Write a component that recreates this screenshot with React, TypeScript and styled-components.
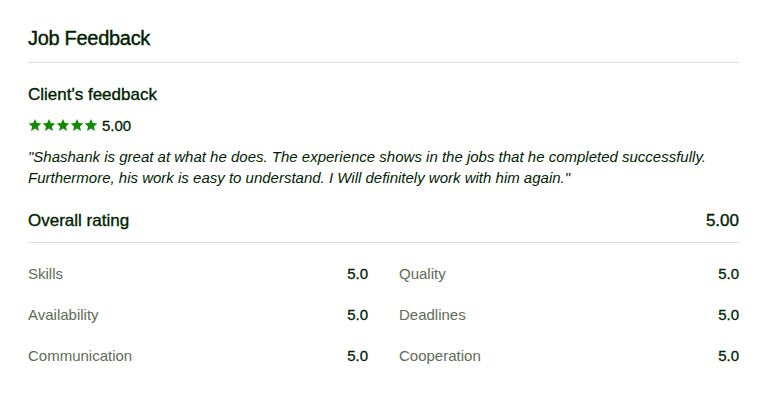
import React from "react";
import styled, { createGlobalStyle } from "styled-components";

const Global = createGlobalStyle`
  html, body { margin: 0; padding: 0; background: #fff; }
  body { font-family: "Liberation Sans", Arial, sans-serif; color: #001e00; }
`;

const Page = styled.section`
  width: 768px;
  box-sizing: border-box;
  padding: 0 29px 0 28px;
`;

const Header = styled.header`
  padding-top: 26px;
  padding-bottom: 12px;
  border-bottom: 1px solid #d5e0d5;
`;

const Title = styled.h2`
  margin: 0;
  font-size: 20px;
  line-height: 24px;
  font-weight: 400;
  -webkit-text-stroke: 0.4px #001e00;
  letter-spacing: -0.3px;
  color: #001e00;
`;

const Subtitle = styled.h3`
  margin: 21px 0 0;
  font-size: 17px;
  line-height: 22px;
  font-weight: 400;
  -webkit-text-stroke: 0.35px #001e00;
  color: #001e00;
`;

const StarRow = styled.div`
  display: flex;
  align-items: center;
  gap: 4px;
  margin-top: 9px;
  height: 20px;
`;

const Stars = styled.div`
  display: flex;
`;

const Score = styled.span`
  font-size: 15px;
  -webkit-text-stroke: 0.3px #001e00;
  color: #001e00;
`;

const Quote = styled.p`
  margin: 11px 0 0;
  font-size: 15px;
  line-height: 21px;
  font-style: italic;
  color: #001e00;
`;

const OverallRow = styled.div`
  display: flex;
  justify-content: space-between;
  align-items: center;
  margin-top: 22px;
  padding-bottom: 10px;
  border-bottom: 1px solid #d5e0d5;
  font-size: 17px;
  line-height: 22px;
  -webkit-text-stroke: 0.35px #001e00;
`;

const Grid = styled.div`
  display: grid;
  grid-template-columns: 1fr 1fr;
  column-gap: 31px;
  row-gap: 20px;
  padding-top: 20px;
`;

const Metric = styled.div`
  display: flex;
  justify-content: space-between;
  align-items: center;
  height: 21px;
  font-size: 15px;
`;

const Label = styled.span`
  color: #5e6d55;
`;

const Value = styled.span`
  color: #001e00;
  -webkit-text-stroke: 0.3px #001e00;
`;

const Star = () => (
  <svg width="14" height="14" viewBox="0 0 24 24">
    <path
      fill="#108a00"
      d="M12 1.5l3.1 7.2 7.8.7-5.9 5.1 1.8 7.6L12 18.1l-6.8 4 1.8-7.6-5.9-5.1 7.8-.7z"
    />
  </svg>
);

const metrics: [string, string][] = [
  ["Skills", "5.0"],
  ["Quality", "5.0"],
  ["Availability", "5.0"],
  ["Deadlines", "5.0"],
  ["Communication", "5.0"],
  ["Cooperation", "5.0"],
];

export default function App() {
  return (
    <>
      <Global />
      <Page>
        <Header>
          <Title>Job Feedback</Title>
        </Header>
        <Subtitle>Client's feedback</Subtitle>
        <StarRow>
          <Stars>
            {[0, 1, 2, 3, 4].map((i) => (
              <Star key={i} />
            ))}
          </Stars>
          <Score>5.00</Score>
        </StarRow>
        <Quote>
          "Shashank is great at what he does. The experience shows in the jobs that he completed successfully.
          Furthermore, his work is easy to understand. I Will definitely work with him again."
        </Quote>
        <OverallRow>
          <span>Overall rating</span>
          <span>5.00</span>
        </OverallRow>
        <Grid>
          {metrics.map(([l, v]) => (
            <Metric key={l}>
              <Label>{l}</Label>
              <Value>{v}</Value>
            </Metric>
          ))}
        </Grid>
      </Page>
    </>
  );
}
